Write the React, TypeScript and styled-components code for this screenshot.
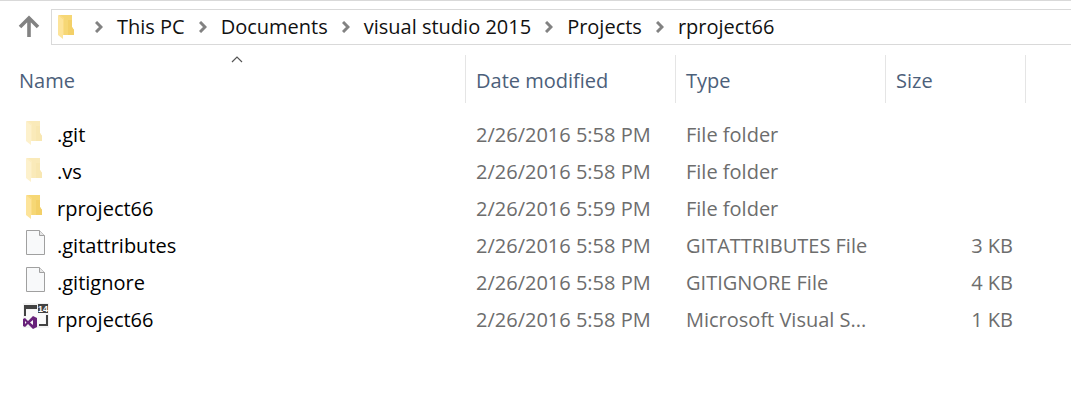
import React from "react";
import styled, { createGlobalStyle } from "styled-components";

const GlobalStyle = createGlobalStyle`
  body {
    margin: 0;
    background: #fff;
    font-family: "Open Sans", "Noto Sans", sans-serif;
    font-size: 20px;
    line-height: 28px;
    color: #000;
  }
`;

const Window = styled.main`
  border-top: 1px solid #d9d9d9;
`;

const Toolbar = styled.div`
  display: flex;
  align-items: center;
  padding: 8px 0 10px 18px;
`;

const UpButton = styled.button`
  display: flex;
  width: 22px;
  margin-right: 11px;
  padding: 0;
  border: 0;
  background: none;
`;

const AddressBar = styled.nav`
  display: flex;
  flex: 1;
  align-items: center;
  height: 34px;
  padding-left: 3px;
  border: 1px solid #d9d9d9;
  border-right: 0;
  white-space: nowrap;
`;

const Trail = styled.ol`
  display: flex;
  margin: 0;
  padding: 0 0 0 18px;
  list-style: none;
`;

const Crumb = styled.li`
  display: flex;
  align-items: center;
  gap: 14px;
  margin-right: 14px;
`;

const CrumbLink = styled.a`
  color: #111;
  text-decoration: none;
`;

const FileTable = styled.table`
  width: calc(100% - 9px);
  margin-left: 9px;
  table-layout: fixed;
  border-collapse: separate;
  border-spacing: 0;
`;

const Col = styled.col<{ $width?: number }>`
  width: ${(p) => (p.$width ? `${p.$width}px` : "auto")};
`;

const HeadCell = styled.th`
  position: relative;
  height: 48px;
  padding: 0;
  border-right: 1px solid #e5e5e5;
  text-align: left;
`;

const SortButton = styled.button`
  width: 100%;
  height: 48px;
  padding: 3px 10px 0;
  border: 0;
  background: none;
  font: inherit;
  font-weight: 400;
  color: #4c607a;
  text-align: left;
`;

const SortMark = styled.svg`
  position: absolute;
  top: 0;
  left: 50%;
  transform: translateX(-50%);
`;

const Body = styled.tbody`
  &::before {
    content: "";
    display: table-row;
    height: 13px;
  }
`;

const Cell = styled.td<{ $align?: "right" }>`
  height: 37px;
  padding: 0 13px 0 10px;
  overflow: hidden;
  color: #6d6d6d;
  text-align: ${(p) => p.$align ?? "left"};
  text-overflow: ellipsis;
  white-space: nowrap;
`;

const FileName = styled.div`
  display: flex;
  align-items: center;
  gap: 8px;
  padding-left: 4px;
  color: #000;
`;

const Icon = styled.svg<{ $faded?: boolean }>`
  flex: none;
  opacity: ${(p) => (p.$faded ? 0.5 : 1)};
`;

type Kind = "folder" | "hidden" | "file" | "solution";

function FolderShape() {
  return (
    <>
      <path d="M4 3H17V15L19 18V23H6Z" fill="#f6d775" />
      <path d="M13 8H17V15L19 18V23H13Z" fill="#f3d068" />
      <path d="M3 3L8 7V27L3 23Z" fill="#fde49a" />
      <path d="M3 3H5L9 6V23H8V7Z" fill="#fbdc85" />
    </>
  );
}

function FileIcon({ kind }: { kind: Kind }) {
  return (
    <Icon width="26" height="33" viewBox="0 0 26 33" $faded={kind === "hidden"} aria-hidden="true">
      {(kind === "folder" || kind === "hidden") && <FolderShape />}
      {kind === "file" && (
        <>
          <path d="M3.5 1.5H16.5L21.5 6.5V25.5H3.5Z" fill="#f8f9fa" stroke="#a0a0a0" />
          <path d="M16.5 1.5V6.5H21.5" fill="#e6e6e6" stroke="#a0a0a0" />
        </>
      )}
      {kind === "solution" && (
        <>
          <path d="M0 0H26V25H0Z" fill="#f3f3f3" />
          <path d="M3 7H22V22H3Z" fill="#fafafa" />
          <path d="M1 2H14V6H3V13H1Z" fill="#424242" />
          <path d="M15 1H25V10H15Z" fill="#424242" />
          <path d="M23 12H25V23H16V21H23Z" fill="#424242" />
          <text x="20" y="9" textAnchor="middle" fontFamily="Liberation Sans, sans-serif" fontSize="9" fontWeight="700" fill="#fff">
            14
          </text>
          <path d="M10 13L14 15V24L10 26L5 21L2 24L0 23V16L2 15L5 18ZM10 17L7 19.5L10 22ZM2 18V21L3.5 19.5Z" fill="#68217a" fillRule="evenodd" />
        </>
      )}
    </Icon>
  );
}

function Chevron() {
  return (
    <Icon width="8" height="12" viewBox="0 0 8 12" aria-hidden="true">
      <path d="M1 1L6 6L1 11" fill="none" stroke="#828282" strokeWidth="3" />
    </Icon>
  );
}

const path = ["This PC", "Documents", "visual studio 2015", "Projects", "rproject66"];

const files: { name: string; kind: Kind; date: string; type: string; size: string }[] = [
  { name: ".git", kind: "hidden", date: "2/26/2016 5:58 PM", type: "File folder", size: "" },
  { name: ".vs", kind: "hidden", date: "2/26/2016 5:58 PM", type: "File folder", size: "" },
  { name: "rproject66", kind: "folder", date: "2/26/2016 5:59 PM", type: "File folder", size: "" },
  { name: ".gitattributes", kind: "file", date: "2/26/2016 5:58 PM", type: "GITATTRIBUTES File", size: "3 KB" },
  { name: ".gitignore", kind: "file", date: "2/26/2016 5:58 PM", type: "GITIGNORE File", size: "4 KB" },
  { name: "rproject66", kind: "solution", date: "2/26/2016 5:58 PM", type: "Microsoft Visual S...", size: "1 KB" },
];

export default function App() {
  return (
    <Window>
      <GlobalStyle />
      <Toolbar>
        <UpButton aria-label="Up one level">
          <svg width="22" height="24" viewBox="0 0 22 24" aria-hidden="true">
            <path d="M11 22V4M2 12L11 3L20 12" fill="none" stroke="#828282" strokeWidth="3.6" />
          </svg>
        </UpButton>
        <AddressBar aria-label="Address">
          <Icon width="22" height="26" viewBox="0 2 22 26" aria-hidden="true">
            <FolderShape />
          </Icon>
          <Trail>
            {path.map((p) => (
              <Crumb key={p}>
                <Chevron />
                <CrumbLink href="#">{p}</CrumbLink>
              </Crumb>
            ))}
          </Trail>
        </AddressBar>
      </Toolbar>
      <FileTable>
        <colgroup>
          <Col />
          <Col $width={210} />
          <Col $width={210} />
          <Col $width={140} />
          <Col $width={45} />
        </colgroup>
        <thead>
          <tr>
            {["Name", "Date modified", "Type", "Size"].map((label) => (
              <HeadCell key={label} scope="col">
                <SortButton>{label}</SortButton>
                {label === "Name" && (
                  <SortMark width="12" height="8" viewBox="0 0 12 8" aria-hidden="true">
                    <path d="M1 7L6 2L11 7" fill="none" stroke="#555" strokeWidth="1.2" />
                  </SortMark>
                )}
              </HeadCell>
            ))}
          </tr>
        </thead>
        <Body>
          {files.map((f) => (
            <tr key={f.name + f.kind}>
              <Cell>
                <FileName>
                  <FileIcon kind={f.kind} />
                  {f.name}
                </FileName>
              </Cell>
              <Cell>{f.date}</Cell>
              <Cell>{f.type}</Cell>
              <Cell $align="right">{f.size}</Cell>
            </tr>
          ))}
        </Body>
      </FileTable>
    </Window>
  );
}
